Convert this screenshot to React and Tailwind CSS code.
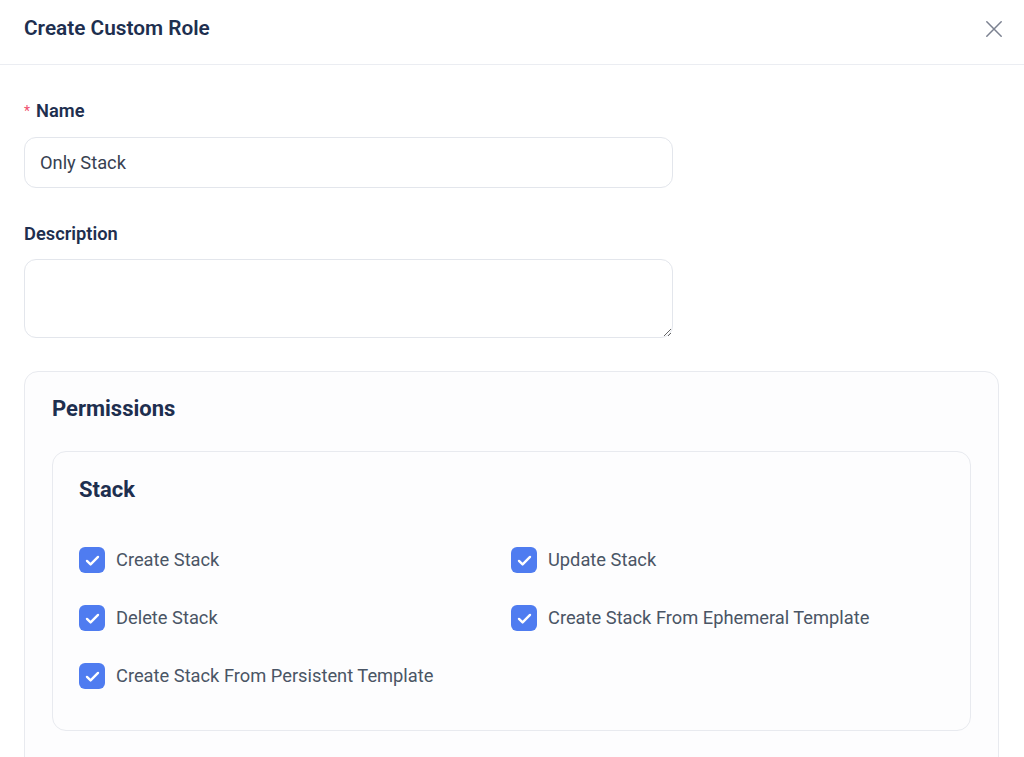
import React from "react";

const permissions = [
  "Create Stack",
  "Update Stack",
  "Delete Stack",
  "Create Stack From Ephemeral Template",
  "Create Stack From Persistent Template",
];

const CheckIcon = () => (
  <svg viewBox="0 0 16 16" className="w-[17px] h-[17px]" fill="none">
    <path
      d="M2.8 8.4l3.4 3.3L13.2 4.6"
      stroke="white"
      strokeWidth="2.2"
      strokeLinecap="round"
      strokeLinejoin="round"
    />
  </svg>
);

const PermissionItem = ({ label }) => (
  <label className="flex items-center gap-x-[11px] h-[26px] cursor-pointer">
    <span className="flex items-center justify-center w-[26px] h-[26px] rounded-[6px] bg-[#4f7cf0]">
      <CheckIcon />
    </span>
    <span className="text-[18.3px] text-[#4a5565]">{label}</span>
  </label>
);

const App = () => {
  return (
    <div
      className="w-[1024px] h-[757px] overflow-hidden bg-white text-[#1e2f4f]"
      style={{ fontFamily: "Roboto, 'Liberation Sans', sans-serif" }}
    >
      {/* header */}
      <div className="flex items-center justify-between h-[65px] pb-[6px] px-6 border-b border-[#ebedf2]">
        <h2 className="text-[20.8px] font-semibold">Create Custom Role</h2>
        <button className="text-[#7b8190] mr-[-6px]">
          <svg viewBox="0 0 24 24" className="w-6 h-6" fill="none">
            <path
              d="M4.8 4.8l14.4 14.4M19.2 4.8L4.8 19.2"
              stroke="currentColor"
              strokeWidth="1.5"
              strokeLinecap="round"
            />
          </svg>
        </button>
      </div>

      <div className="px-6 pt-[35px]">
        {/* name */}
        <div className="flex items-center gap-x-[6px] h-[20px] mt-[1px]">
          <span className="text-[#f0506e] text-[14px]">*</span>
          <span className="text-[18.3px] font-semibold">Name</span>
        </div>
        <input
          className="mt-[16px] w-[649px] h-[51px] px-[15px] rounded-[12px] border border-[#e3e6ec] text-[18.3px] text-[#374151] outline-none"
          defaultValue="Only Stack"
        />

        {/* description */}
        <div className="mt-[36px] h-[20px] flex items-center text-[18.3px] font-semibold">
          Description
        </div>
        <textarea className="block mt-[15px] w-[649px] h-[79px] px-4 py-3 rounded-[12px] border border-[#e3e6ec] outline-none" />

        {/* permissions */}
        <div className="mt-[33px] w-[975px] rounded-[14px] border border-[#e8eaef] bg-[#fdfdfe] px-[27px] pt-[23px] pb-[60px]">
          <h3 className="text-[22px] font-bold h-[26px] flex items-center">Permissions</h3>
          <div className="mt-[30px] rounded-[14px] border border-[#e8eaef] bg-[#fdfdfe] px-[26px] pt-[23px] pb-[41px]">
            <h4 className="text-[22px] font-bold h-[28px] flex items-center">Stack</h4>
            <div className="mt-[44px] grid grid-cols-2 gap-y-[32px] w-[864px]">
              {permissions.map((p) => (
                <PermissionItem key={p} label={p} />
              ))}
            </div>
          </div>
        </div>
      </div>
    </div>
  );
};

export default App;
